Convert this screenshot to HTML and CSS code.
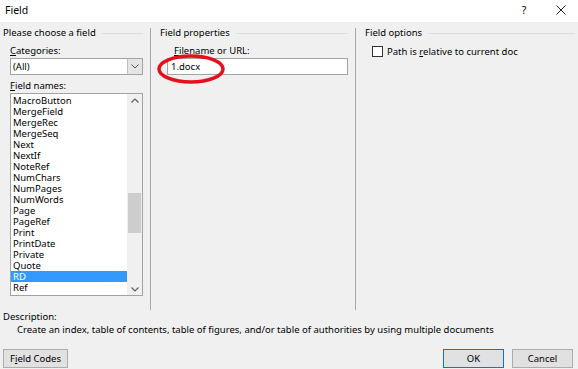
FILE: index.html
```html
<!DOCTYPE html>
<html lang="en">
<head>
    <meta charset="UTF-8">
    <title>Field</title>
    <link rel="stylesheet" href="styles.css">
</head>
<body>
    <div class="dialog">
        <div class="titlebar">
            <span class="title">Field</span>
            <span class="help">?</span>
            <span class="close">
                <svg width="10" height="10" viewBox="0 0 10 10"><path d="M0.5 0.5 L9.5 9.5 M9.5 0.5 L0.5 9.5" stroke="#222" stroke-width="1"/></svg>
            </span>
        </div>

        <div class="main">
            <div class="col col-left">
                <div class="heading">Please choose a field</div>
                <div class="label"><u>C</u>ategories:</div>
                <div class="combo">
                    <span class="combo-text">(All)</span>
                    <span class="combo-btn">
                        <svg width="8" height="5" viewBox="0 0 8 5"><path d="M0.5 0.5 L4 4 L7.5 0.5" fill="none" stroke="#555" stroke-width="1"/></svg>
                    </span>
                </div>
                <div class="label label-names"><u>F</u>ield names:</div>
                <div class="listbox">
                    <ul class="items">
                        <li>MacroButton</li>
                        <li>MergeField</li>
                        <li>MergeRec</li>
                        <li>MergeSeq</li>
                        <li>Next</li>
                        <li>NextIf</li>
                        <li>NoteRef</li>
                        <li>NumChars</li>
                        <li>NumPages</li>
                        <li>NumWords</li>
                        <li>Page</li>
                        <li>PageRef</li>
                        <li>Print</li>
                        <li>PrintDate</li>
                        <li>Private</li>
                        <li>Quote</li>
                        <li class="selected">RD</li>
                        <li>Ref</li>
                    </ul>
                    <div class="scrollbar">
                        <span class="arrow">
                            <svg width="8" height="5" viewBox="0 0 8 5"><path d="M0.5 4.5 L4 1 L7.5 4.5" fill="none" stroke="#606060" stroke-width="1.2"/></svg>
                        </span>
                        <div class="track"><div class="thumb"></div></div>
                        <span class="arrow">
                            <svg width="8" height="5" viewBox="0 0 8 5"><path d="M0.5 0.5 L4 4 L7.5 0.5" fill="none" stroke="#606060" stroke-width="1.2"/></svg>
                        </span>
                    </div>
                </div>
            </div>

            <div class="col col-mid">
                <div class="heading">Field properties</div>
                <div class="inner">
                    <div class="label"><u>F</u>ilename or URL:</div>
                    <div class="textbox">1.docx</div>
                </div>
                <svg class="mark" width="72" height="34" viewBox="0 0 72 34">
                    <ellipse cx="36" cy="16" rx="32" ry="13" fill="none" stroke="#e5101b" stroke-width="3.5"/>
                </svg>
            </div>

            <div class="col col-right">
                <div class="heading">Field options</div>
                <label class="check">
                    <span class="box"></span>
                    <span>Path is <u>r</u>elative to current doc</span>
                </label>
            </div>
        </div>

        <div class="description">
            <div>Description:</div>
            <div class="desc-text">Create an index, table of contents, table of figures, and/or table of authorities by using multiple documents</div>
        </div>

        <div class="footer">
            <button class="btn btn-codes">F<u>i</u>eld Codes</button>
            <div class="spacer"></div>
            <button class="btn btn-ok">OK</button>
            <button class="btn btn-cancel">Cancel</button>
        </div>
    </div>
</body>
</html>
```

FILE: styles.css
```css
body {
    margin: 0;
    padding: 0;
    font-family: 'Noto Sans', 'Open Sans', sans-serif;
    font-size: 9.5px;
    color: #000;
    background-color: #f0f0f0;
}

u {
    text-decoration: underline;
    text-underline-offset: 1px;
}

.dialog {
    width: 578px;
    height: 369px;
    overflow: hidden;
    background-color: #f0f0f0;
}

.titlebar {
    height: 22px;
    box-sizing: border-box;
    background-color: #ffffff;
    display: flex;
    align-items: center;
    padding: 0 12px 3px 5px;
    font-size: 10.5px;
}

.title {
    flex: 1;
}

.help {
    width: 20px;
    margin-right: 22px;
    text-align: center;
}

.close {
    display: flex;
    align-items: center;
    padding-top: 1px;
}

.main {
    display: flex;
    height: 282px;
    margin-top: 6px;
}

.col {
    position: relative;
    box-sizing: border-box;
}

.col-left {
    width: 150px;
    padding: 0 7px 0 3px;
}

.col-mid {
    width: 205px;
    border-left: 1px solid #a8a8a8;
    padding: 0 7px 0 9px;
}

.col-right {
    flex: 1;
    border-left: 1px solid #a8a8a8;
    padding: 0 3px 0 9px;
}

.heading {
    display: flex;
    align-items: center;
    height: 13px;
    margin-top: -2px;
    white-space: nowrap;
}

.heading::after {
    content: "";
    flex: 1;
    height: 1px;
    margin-left: 6px;
    margin-top: 2px;
    background-color: #dcdcdc;
}

.label {
    height: 11px;
    line-height: 11px;
    margin: 6px 0 2px 7px;
}

.label-names {
    margin-top: 5px;
}

.combo {
    display: flex;
    height: 17px;
    margin-left: 7px;
    box-sizing: border-box;
    border: 1px solid #a3a3a3;
    background-color: #ffffff;
}

.combo-text {
    flex: 1;
    line-height: 15px;
    padding-left: 2px;
}

.combo-btn {
    width: 14px;
    display: flex;
    align-items: center;
    justify-content: center;
    background-color: #e5e5e5;
    border-left: 1px solid #c0c0c0;
}

.listbox {
    display: flex;
    height: 203px;
    margin-left: 7px;
    box-sizing: border-box;
    border: 1px solid #a3a3a3;
    background-color: #ffffff;
}

.items {
    flex: 1;
    list-style: none;
    margin: 0;
    padding: 1px 0 0 0;
}

.items li {
    height: 11px;
    line-height: 11px;
    padding-left: 2px;
}

.items li.selected {
    background-color: #3399ff;
    color: #ffffff;
}

.scrollbar {
    width: 15px;
    display: flex;
    flex-direction: column;
    background-color: #f0f0f0;
}

.arrow {
    height: 12px;
    display: flex;
    align-items: center;
    justify-content: center;
}

.track {
    flex: 1;
    padding-top: 87px;
}

.thumb {
    height: 40px;
    margin: 0 1px;
    background-color: #cdcdcd;
}

.inner {
    padding-left: 7px;
}

.textbox {
    height: 17px;
    line-height: 15px;
    box-sizing: border-box;
    border: 1px solid #a3a3a3;
    background-color: #ffffff;
    padding-left: 3px;
}

.mark {
    position: absolute;
    left: 4px;
    top: 25px;
}

.check {
    display: flex;
    align-items: center;
    margin: 6px 0 0 7px;
    gap: 4px;
}

.box {
    width: 11px;
    height: 11px;
    box-sizing: border-box;
    border: 1px solid #333333;
    background-color: #ffffff;
}

.description {
    padding: 0 3px;
    line-height: 13px;
}

.desc-text {
    padding-left: 14px;
}

.footer {
    display: flex;
    margin-top: 13px;
    padding: 0 5px 0 3px;
}

.spacer {
    flex: 1;
}

.btn {
    height: 19px;
    box-sizing: border-box;
    font-family: inherit;
    font-size: 9.5px;
    background-color: #e1e1e1;
    border: 1px solid #adadad;
    padding: 0;
    color: #000;
}

.btn-codes {
    width: 65px;
}

.btn-ok {
    width: 61px;
    border-color: #0078d7;
    margin-right: 8px;
}

.btn-cancel {
    width: 61px;
}
```
